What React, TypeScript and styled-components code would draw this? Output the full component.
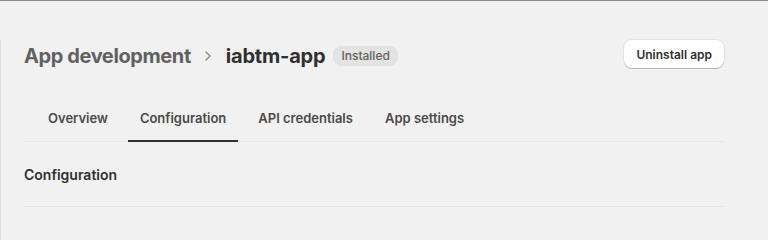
import React from "react";
import styled, { createGlobalStyle } from "styled-components";

const GlobalStyle = createGlobalStyle`
  html, body {
    margin: 0;
    background: #f1f1f1;
    font-family: Inter, "Noto Sans", sans-serif;
    color: #303030;
    -webkit-font-smoothing: antialiased;
  }
  body {
    border-top: 1px solid #8a8a8a;
    overflow: hidden;
  }
`;

const Shell = styled.div`
  box-sizing: border-box;
  min-height: calc(100vh - 40px);
  margin-top: 39px;
  border-left: 1px solid #dedede;
  padding: 0 44px 0 23px;
`;

const Header = styled.header`
  display: flex;
  align-items: center;
  justify-content: space-between;
  height: 28px;
  margin-top: 2px;
`;

const TitleRow = styled.div`
  display: flex;
  align-items: center;
  padding-top: 3px;
`;

const Crumb = styled.span`
  font-size: 20px;
  font-weight: 650;
  letter-spacing: -0.4px;
  color: #616161;
`;

const Title = styled.h1`
  margin: 0;
  font-size: 20px;
  font-weight: 650;
  letter-spacing: -0.2px;
  color: #303030;
`;

const Chevron = styled.svg`
  width: 16px;
  height: 16px;
  margin: 0 10px 0 9px;
  color: #8a8a8a;
`;

const Badge = styled.span`
  margin-left: 8px;
  padding: 2px 8px;
  border-radius: 8px;
  background: #e3e3e3;
  color: #616161;
  font-size: 12px;
  font-weight: 450;
  line-height: 16px;
`;

const Button = styled.button`
  height: 28px;
  padding: 0 12px;
  border: none;
  border-radius: 8px;
  background: #ffffff;
  color: #303030;
  font-family: inherit;
  font-size: 12px;
  font-weight: 600;
  box-shadow: 0 1px 0 0 #b5b5b5, 0 0 0 1px #e3e3e3;
  cursor: pointer;
`;

const Tabs = styled.nav`
  display: flex;
  gap: 8px;
  margin-top: 29px;
  padding-left: 12px;
  border-bottom: 1px solid #e6e6e6;
`;

const Tab = styled.button<{ $active?: boolean }>`
  margin-bottom: -1px;
  padding: 11px 12px 12px;
  border: none;
  border-bottom: 2px solid ${(p) => (p.$active ? "#303030" : "transparent")};
  background: none;
  color: #4a4a4a;
  font-family: inherit;
  font-size: 13px;
  font-weight: 600;
  line-height: 20px;
  cursor: pointer;
`;

const Section = styled.section`
  padding: 23px 0 21px;
  border-bottom: 1px solid #e6e6e6;
`;

const SectionTitle = styled.h2`
  margin: 0;
  font-size: 14px;
  font-weight: 620;
  line-height: 20px;
  color: #303030;
`;

const tabs = ["Overview", "Configuration", "API credentials", "App settings"];

export default function App() {
  return (
    <>
      <GlobalStyle />
      <Shell>
        <Header>
          <TitleRow>
            <Crumb>App development</Crumb>
            <Chevron viewBox="0 0 16 16" fill="none">
              <path
                d="M6 4 10 8 6 12"
                stroke="currentColor"
                strokeWidth="1.4"
                strokeLinecap="round"
                strokeLinejoin="round"
              />
            </Chevron>
            <Title>iabtm-app</Title>
            <Badge>Installed</Badge>
          </TitleRow>
          <Button>Uninstall app</Button>
        </Header>
        <Tabs>
          {tabs.map((t) => (
            <Tab key={t} $active={t === "Configuration"}>
              {t}
            </Tab>
          ))}
        </Tabs>
        <Section>
          <SectionTitle>Configuration</SectionTitle>
        </Section>
      </Shell>
    </>
  );
}
